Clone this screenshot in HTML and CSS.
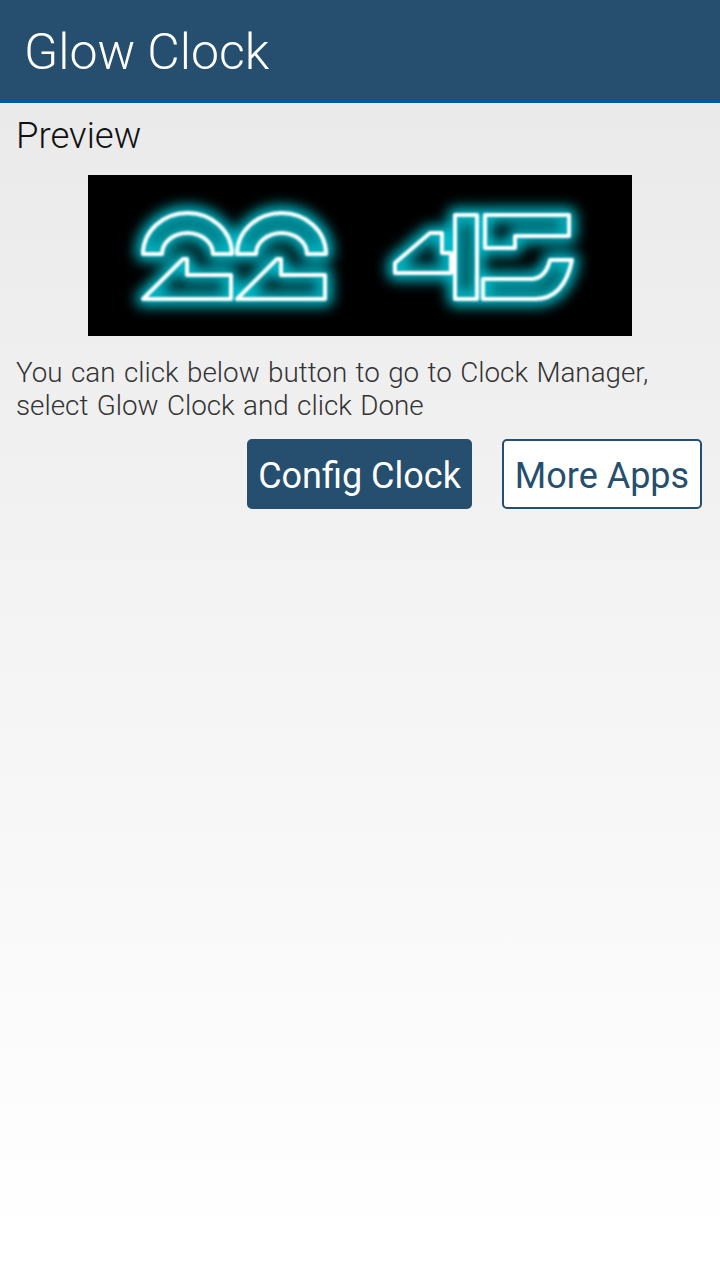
FILE: index.html
```html
<!DOCTYPE html>
<html lang="en">
<head>
<meta charset="utf-8">
<title>Glow Clock</title>
<link rel="stylesheet" href="styles.css">
</head>
<body>
<header class="app-bar"><h1 class="app-title">Glow Clock</h1></header>
<main class="content">
  <h2 class="section-title">Preview</h2>
  <div class="preview">
    <svg class="clock" viewBox="0 0 544 161" width="544" height="161" role="img" aria-label="22 45">
      <defs>
        <filter id="glow" x="-20%" y="-40%" width="140%" height="180%"><feGaussianBlur stdDeviation="6.5"/></filter>
        <filter id="soft" x="-5%" y="-10%" width="110%" height="120%"><feGaussianBlur stdDeviation="0.8"/></filter>
        <g id="digits">
          <path d="M55 79A44.5 41 0 0 1 144 79H125A25.5 21 0 0 0 74 79Z"/>
          <path d="M55 124L95 84H99V100H143V124Z"/>
          <path d="M149 79A44.5 41 0 0 1 238 79H219A25.5 21 0 0 0 168 79Z"/>
          <path d="M149 124L189 84H193V100H237V124Z"/>
          <path d="M307 88L342 58H354V78H363V98H307Z"/>
          <path d="M367 40H389V124H367Z"/>
          <path d="M397 40H481V61H427V73H397Z"/>
          <path d="M395 104H445Q458 102 462 85H484Q476 124 447 124H395Z"/>
        </g>
      </defs>
      <use href="#digits" class="glow-layer" filter="url(#glow)"/>
      <use href="#digits" class="line-layer" filter="url(#soft)"/>
    </svg>
  </div>
  <p class="hint">You can click below button to go to Clock Manager, select Glow Clock and click Done</p>
  <div class="actions">
    <button class="btn btn-primary" type="button">Config Clock</button>
    <button class="btn btn-outline" type="button">More Apps</button>
  </div>
</main>
</body>
</html>
```
FILE: styles.css
```css
* { box-sizing: border-box; }
html, body { margin: 0; height: 100%; }
body {
  width: 720px;
  height: 1280px;
  overflow: hidden;
  font-family: Roboto, "Liberation Sans", sans-serif;
  background: linear-gradient(180deg, #eaeaea 0, #eaeaea 103px, #ffffff 1240px);
}
.app-bar {
  height: 103px;
  background: #264e6e;
  border-bottom: 3px solid #0059a0;
  padding-left: 24px;
  display: flex;
  align-items: center;
}
.app-title {
  margin: 3px 0 0;
  font-size: 50px;
  font-weight: 300;
  color: #fff;
}
.content { padding: 13px 18px 0 16px; }
.section-title {
  margin: 0;
  font-size: 36.5px;
  line-height: 40px;
  font-weight: 300;
  color: #111;
}
.preview { display: flex; justify-content: center; margin: 19px -2px 0 0; }
.clock { display: block; background: #000; }
.glow-layer { fill: none; stroke: #00bccb; stroke-width: 15; stroke-linejoin: round; }
.line-layer { fill: none; stroke: #fff; stroke-width: 4; stroke-linejoin: round; }
.hint {
  margin: 20px 0 0;
  font-size: 27.8px;
  word-spacing: 1.6px;
  line-height: 33px;
  font-weight: 300;
  color: #333;
}
.actions { display: flex; justify-content: flex-end; gap: 30px; margin-top: 17px; }
.btn {
  height: 70px;
  border-radius: 5px;
  font-family: inherit;
  font-size: 36px;
  font-weight: 400;
  padding: 4px 0 0;
}
.btn-primary { width: 225px; background: #264e6e; border: 2px solid #264e6e; color: #fff; }
.btn-outline { width: 200px; background: #fff; border: 2px solid #264e6e; color: #264e6e; }
```
